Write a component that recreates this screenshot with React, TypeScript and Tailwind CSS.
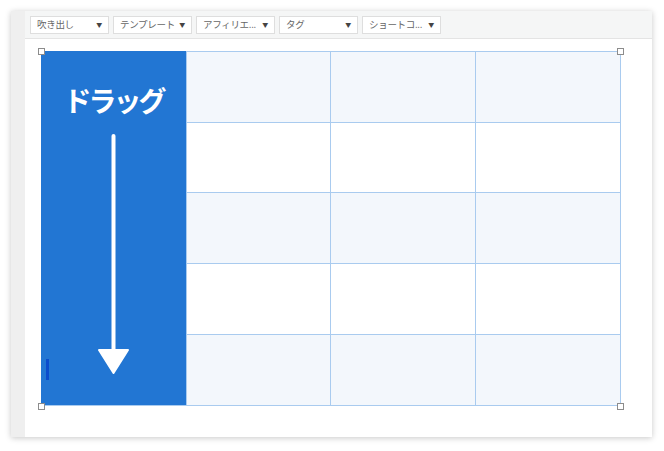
const menus = ["吹き出し", "テンプレート", "アフィリエ...", "タグ", "ショートコ..."];

const rowHeights = ["h-[71px]", "h-[70px]", "h-[71px]", "h-[71px]", "h-[71px]"];
const colWidths = ["w-[145px]", "w-[144px]", "w-[145px]", "w-[145px]"];

function Handle({ className }: { className: string }) {
  return (
    <div
      className={`absolute h-[7px] w-[7px] border border-[#8c8c8c] bg-white ${className}`}
    />
  );
}

function DragArrow() {
  return (
    <svg width="32" height="242" viewBox="0 0 32 242" className="mt-[17px]">
      <line x1="15.5" y1="2" x2="15.5" y2="220" stroke="white" strokeWidth="4" strokeLinecap="round" />
      <polygon
        points="1,216 30,216 15.5,239"
        fill="white"
        stroke="white"
        strokeWidth="2"
        strokeLinejoin="round"
      />
    </svg>
  );
}

export default function App() {
  return (
    <div
      className="h-[451px] w-[664px] bg-white pl-[11px] pt-[11px]"
      style={{ fontFamily: '"Noto Sans CJK JP", "Noto Sans", sans-serif' }}
    >
      <div className="flex h-[426px] w-[641px] shadow-[0_1px_6px_rgba(0,0,0,0.22)]">
        <div className="w-[14px] bg-[#efefef]" />
        <div className="flex flex-1 flex-col bg-white">
          <div className="flex h-[28px] items-center gap-[4px] border-b border-[#e4e4e4] bg-[#f5f6f6] pl-[5px]">
            {menus.map((m) => (
              <div
                key={m}
                className="flex h-[18px] w-[79px] items-center justify-between whitespace-nowrap border border-[#dedede] bg-white pl-[6px] pr-[6px] text-[9.5px] tracking-[-0.3px] text-[#666]"
              >
                <span className="leading-none">{m}</span>
                <span className="text-[6px] leading-none text-[#444]">▼</span>
              </div>
            ))}
          </div>
          <div className="pl-[16px] pt-[12px]">
            <div className="relative w-fit">
              <div className="border-l border-t border-[#a9cbef]">
                {rowHeights.map((h, r) => (
                  <div key={r} className={`flex ${r % 2 === 0 ? "bg-[#f3f7fc]" : "bg-white"}`}>
                    {colWidths.map((w, c) => (
                      <div key={c} className={`${w} ${h} border-b border-r border-[#a9cbef]`} />
                    ))}
                  </div>
                ))}
              </div>
              <div className="absolute left-0 top-0 flex h-[354px] w-[145px] flex-col items-center bg-[#2276d3] pt-[32px]">
                <div className="text-[28px] font-bold leading-[34px] tracking-[-3px] text-white">
                  ドラッグ
                </div>
                <DragArrow />
                <div className="absolute left-[5px] top-[308px] h-[21px] w-[3px] bg-[#0b4ccc]" />
              </div>
              <Handle className="-left-[3px] -top-[3px]" />
              <Handle className="-right-[3px] -top-[3px]" />
              <Handle className="-bottom-[4px] -left-[3px]" />
              <Handle className="-bottom-[4px] -right-[3px]" />
            </div>
          </div>
        </div>
      </div>
    </div>
  );
}
